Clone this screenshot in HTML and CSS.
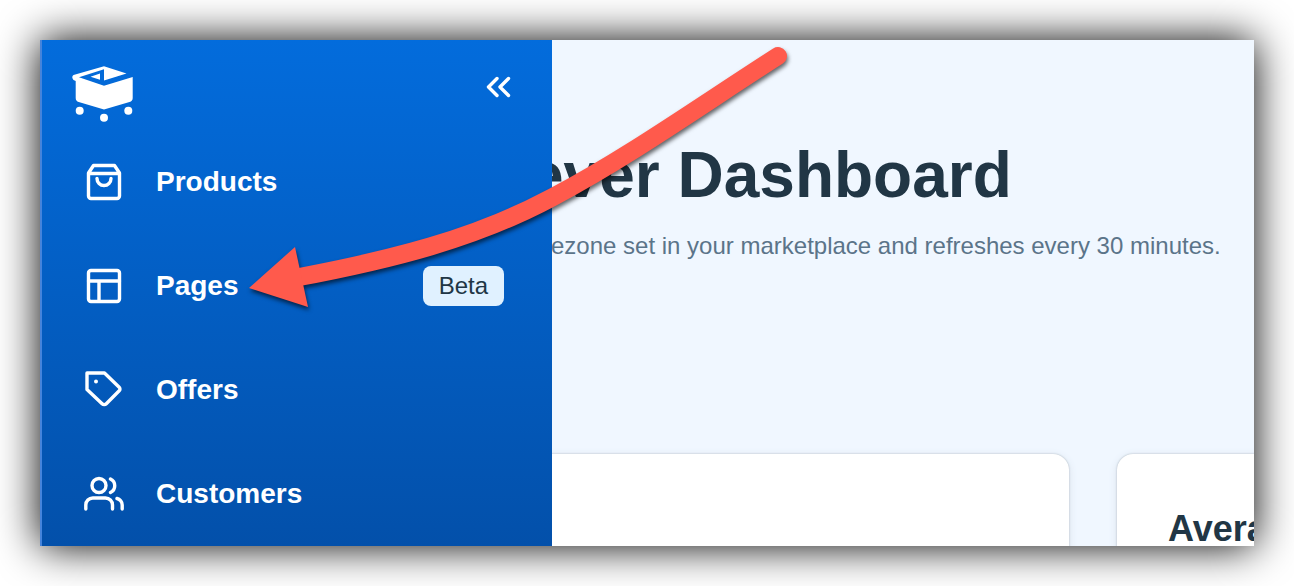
FILE: index.html
```html
<!DOCTYPE html>
<html lang="en">
<head>
<meta charset="utf-8">
<title>Dashboard</title>
<link rel="stylesheet" href="styles.css">
</head>
<body>
<div class="app">
  <aside class="sidebar">
    <div class="brand">
      <svg class="logo" viewBox="0 0 64 60" role="img" aria-label="Home">
        <path d="M33 1.200 2.500 10Q0 12 2.500 15L4.700 16v17q0 3 3 4L33 44.500 58.500 37q3.200-1 3.200-4V12L33 20.700 8 12.300 33 4.200z"/>
        <path d="M33 1.200 55.500 8.500 33 15.500zM19.500 11.700 29 8.500v6.200z"/>
        <circle cx="8.700" cy="45.700" r="4"/><circle cx="33" cy="52.700" r="4"/><circle cx="57.300" cy="45.700" r="4"/>
      </svg>
      <button class="collapse" type="button" aria-label="Collapse menu">
        <svg class="chevrons" viewBox="0 0 28 28"><path d="M13 5.500 4.500 14l8.500 8.500M24.500 5.500 16 14l8.500 8.500"/></svg>
      </button>
    </div>
    <nav class="menu">
      <a class="item" href="#products">
        <svg class="icon" viewBox="0 0 40 40"><path d="M4.500 11 9.500 3.500h21l5 7.500M4.500 11.500h31V34a2.500 2.500 0 0 1-2.500 2.500H7A2.500 2.500 0 0 1 4.500 34zM13 16.500a7 7 0 0 0 14 0"/></svg>
        <span>Products</span>
      </a>
      <a class="item" href="#pages">
        <svg class="icon" viewBox="0 0 40 40"><rect x="4.500" y="4.500" width="31" height="31" rx="2.500"/><path d="M4.500 15h31M15 15v20"/></svg>
        <span>Pages</span>
        <span class="badge">Beta</span>
      </a>
      <a class="item" href="#offers">
        <svg class="icon" viewBox="0 0 40 40"><path d="M3 3h17.500l14.700 14.200a2.500 2.500 0 0 1 0 3.600L22.300 33.700a3 3 0 0 1-4.200 0L3 19.500z"/><circle class="dot" cx="12" cy="11.500" r="2"/></svg>
        <span>Offers</span>
      </a>
      <a class="item" href="#customers">
        <svg class="icon" viewBox="0 0 40 40"><circle cx="15" cy="11.500" r="7"/><path d="M26.500 5a7.500 7.500 0 0 1 0 13.500M1.800 35v-4a7 7 0 0 1 7-7h12.700a7 7 0 0 1 7 7v4M33 24.500c3 .8 5.200 3.500 5.200 6.500v4"/></svg>
        <span>Customers</span>
      </a>
    </nav>
  </aside>
  <main class="content">
    <header class="intro">
      <h1 class="title">ever Dashboard</h1>
      <p class="note">ezone set in your marketplace and refreshes every 30 minutes.</p>
    </header>
    <div class="cards">
      <section class="card"></section>
      <section class="card"><h2 class="card-title">Average</h2></section>
    </div>
  </main>
</div>
<svg class="arrow" viewBox="0 0 1294 586" aria-hidden="true">
  <path class="shaft" d="M294 278C390 260 475 239 553 197C630 156 700 106 778 56"/>
  <path class="head" d="M249 288 295 247 308 307z"/>
</svg>
</body>
</html>
```
FILE: styles.css
```css
* { box-sizing: border-box; }

body {
  margin: 0;
  height: 100vh;
  padding: 40px;
  background: #fff;
  color: #213645;
  font-family: "Liberation Sans", Arial, sans-serif;
  overflow: hidden;
}

.app {
  display: flex;
  height: 100%;
  box-shadow: 0 0 40px #000;
}

.sidebar {
  flex: 0 0 512px;
  border-left: 2px solid #4584dc;
  background: linear-gradient(#036cdc, #0350aa);
  overflow: hidden;
}

.brand {
  display: flex;
  justify-content: space-between;
  align-items: flex-start;
  height: 90px;
  padding: 25px 40px 0 29px;
}

.logo {
  width: 64px;
  height: 60px;
  fill: #fff;
}

.collapse {
  margin: 8px 0 0;
  padding: 0;
  border: 0;
  background: none;
}

.chevrons { display: block; width: 28px; height: 28px; }

.chevrons,
.icon {
  fill: none;
  stroke: #fff;
  stroke-width: 3.4;
  stroke-linecap: round;
  stroke-linejoin: round;
}

.icon { width: 40px; height: 40px; }
.dot { fill: #fff; stroke: none; }

.item {
  display: flex;
  align-items: center;
  gap: 32px;
  height: 104px;
  padding: 0 48px 0 42px;
  color: #fff;
  font-size: 28px;
  font-weight: 700;
  text-decoration: none;
}

.badge {
  margin-left: auto;
  padding: 0 16px;
  border-radius: 8px;
  background: #e0f1ff;
  color: #213645;
  font-size: 24px;
  font-weight: 400;
  line-height: 40px;
}

.content {
  flex: 1;
  min-width: 0;
  background: #f0f7ff;
  overflow: hidden;
}

.intro {
  height: 414px;
  margin-left: -24px;
  padding-top: 95px;
  white-space: nowrap;
}

.title {
  margin: 0;
  font-size: 64px;
  line-height: 80px;
}

.note {
  margin: 15px 0 0;
  padding-left: 23px;
  color: #5b7489;
  font-size: 24px;
  line-height: 32px;
}

.cards {
  display: grid;
  grid-template-columns: 565px 565px;
  gap: 48px;
  margin-left: -48px;
}

.card {
  height: 320px;
  padding: 50px;
  border-radius: 16px;
  background: #fff;
  box-shadow: 0 0 2px #aab4be, 0 2px 8px #d8e1ea;
}

.card-title {
  margin: 0;
  padding-left: 1px;
  font-size: 36px;
  line-height: 50px;
}

.arrow {
  position: absolute;
  top: 0;
  left: 0;
  width: 1294px;
  height: 586px;
  pointer-events: none;
  filter: drop-shadow(1px 3px 2px rgba(0, 0, 0, 0.6));
}

.shaft {
  fill: none;
  stroke: #ff5a4c;
  stroke-width: 18;
  stroke-linecap: round;
}

.head { fill: #ff5a4c; }
```
